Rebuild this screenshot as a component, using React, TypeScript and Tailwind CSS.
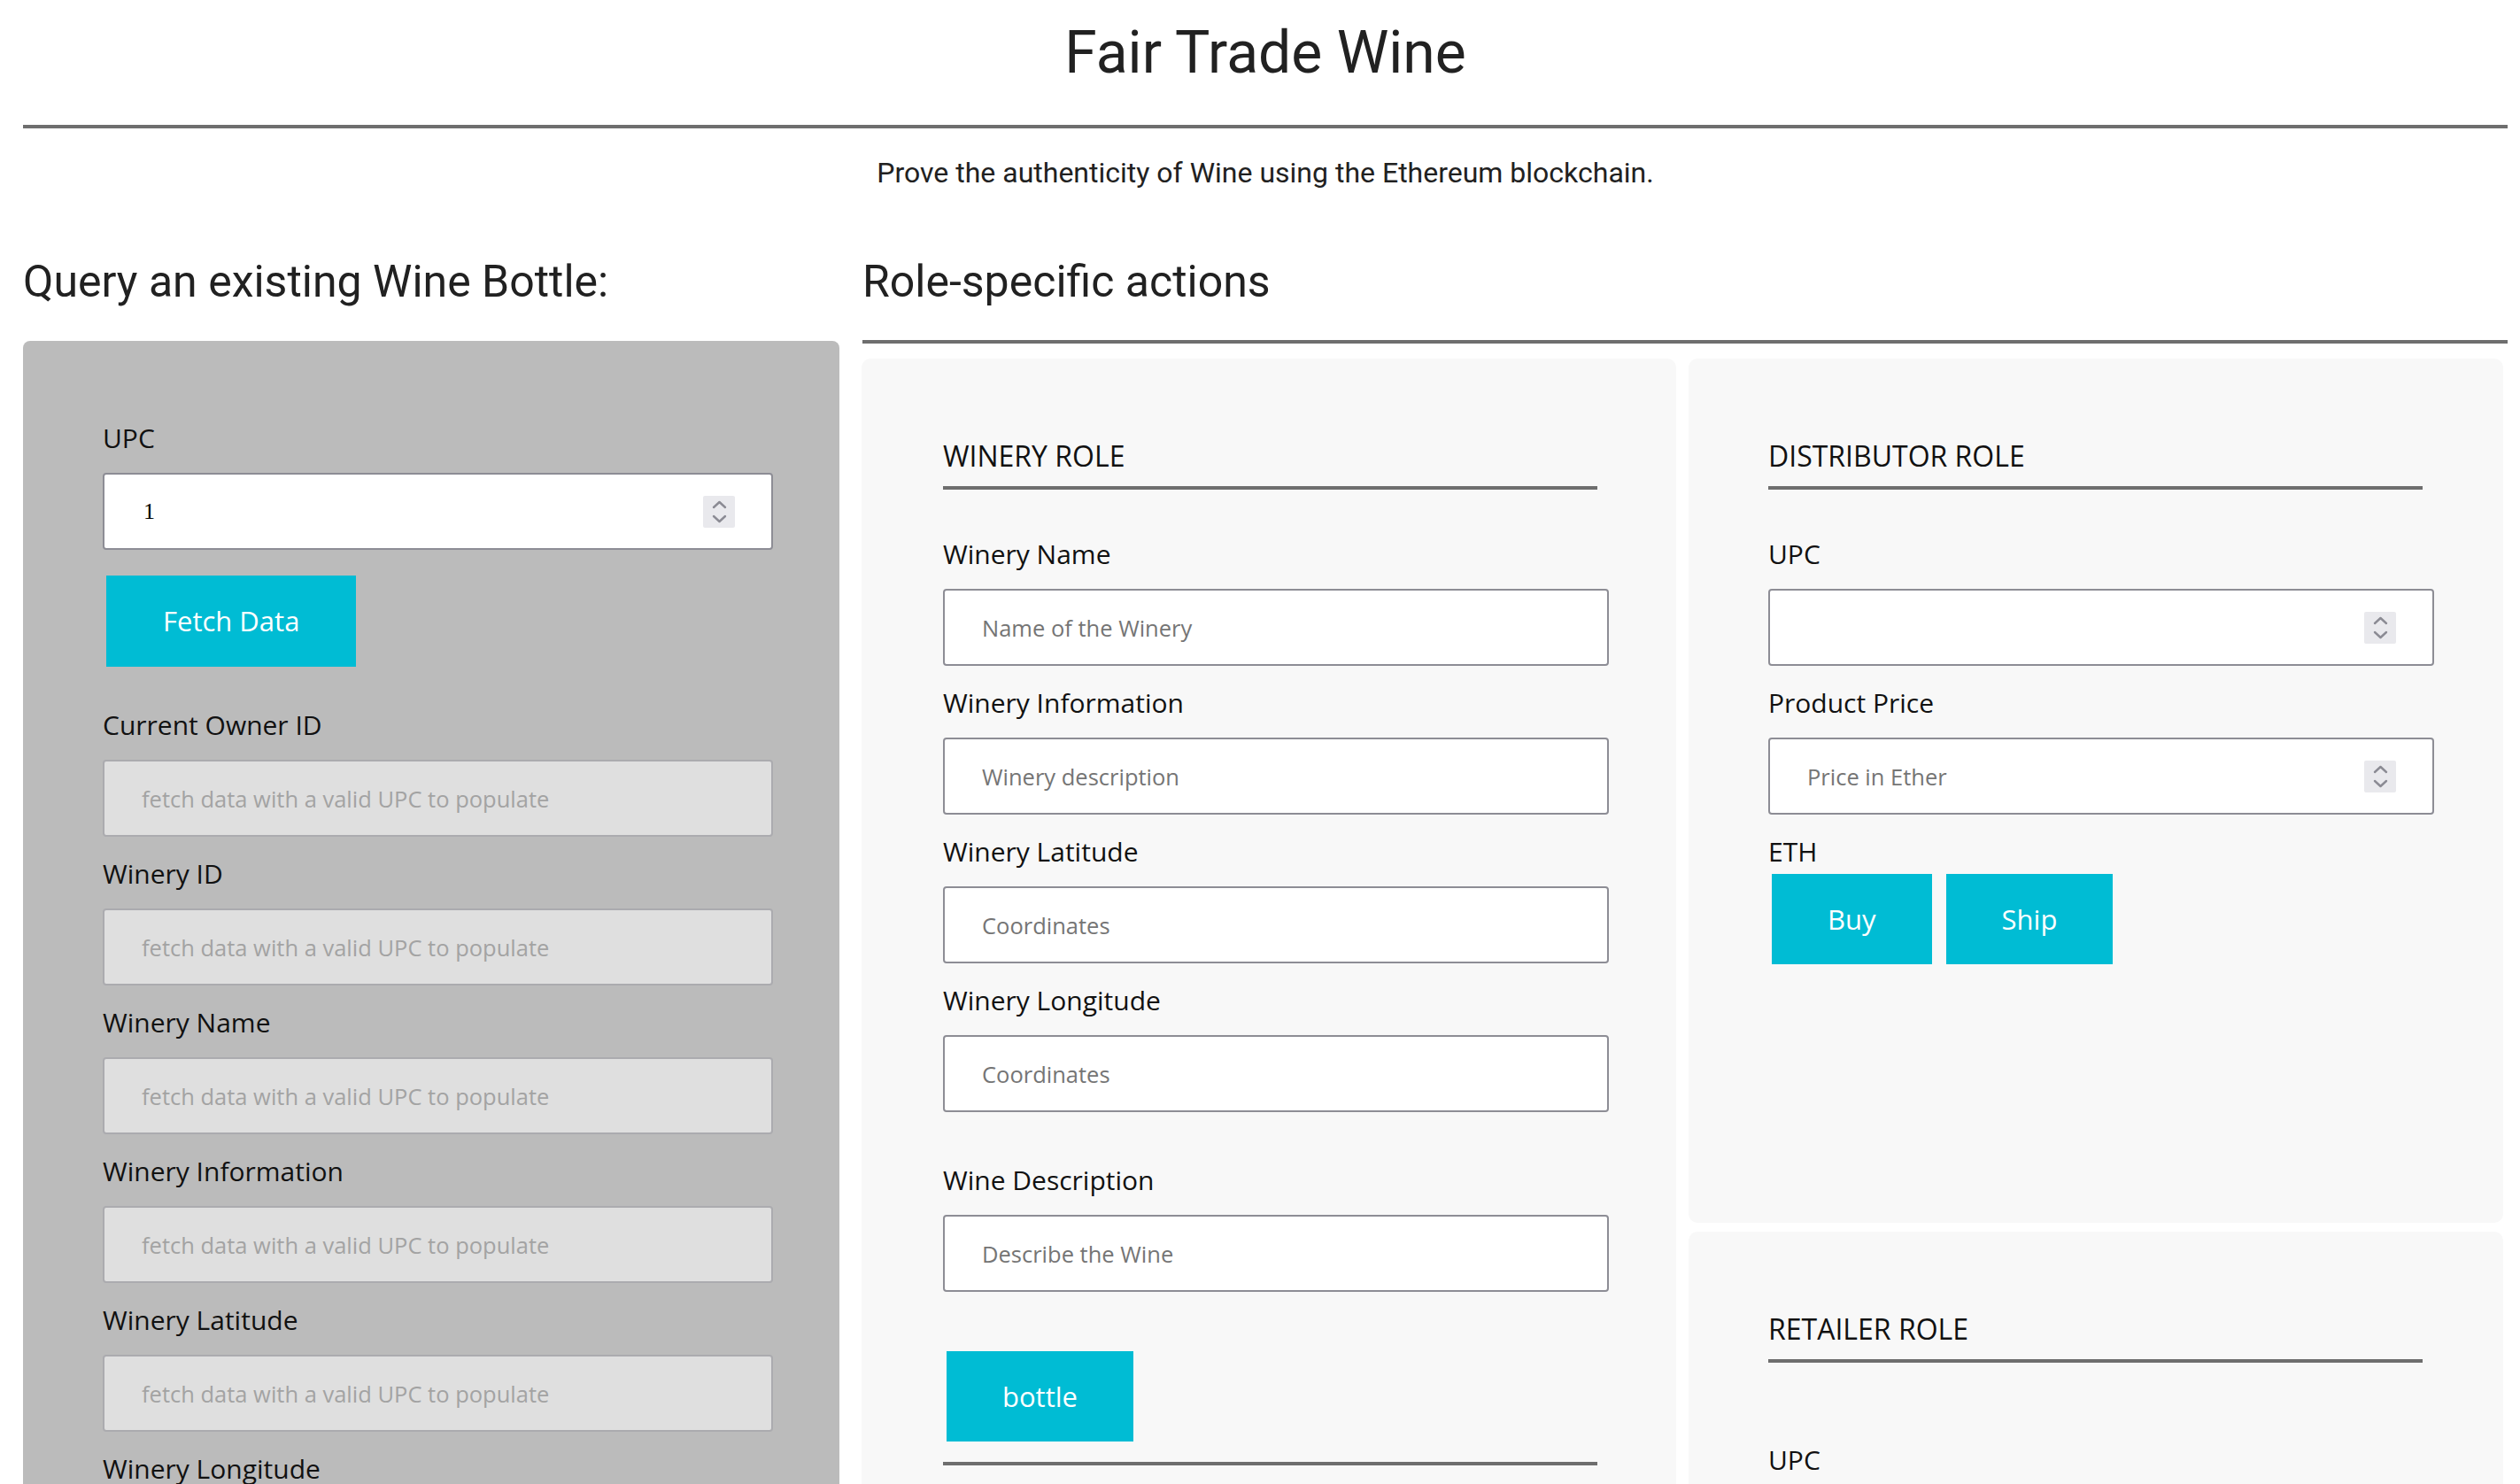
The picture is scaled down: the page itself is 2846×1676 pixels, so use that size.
import React from "react";

const LABEL = "block font-['Open_Sans',sans-serif] text-[30px] leading-[29px] text-[#111]";
const BUTTON =
  "h-[102px] bg-[#00bcd4] px-[63px] font-['Open_Sans',sans-serif] text-[31px] text-white";

function Spinner() {
  return (
    <div className="pointer-events-none absolute right-[43px] top-1/2 h-[36px] w-[36px] -translate-y-1/2 rounded-[2px] bg-[#e9e9ed]">
      <svg viewBox="0 0 36 36" className="h-full w-full" fill="none" stroke="#8b8b94" strokeWidth="2.4" strokeLinecap="round" strokeLinejoin="round">
        <polyline points="12,13 18.5,7 25,13" />
        <polyline points="12,23 18.5,29 25,23" />
      </svg>
    </div>
  );
}

function Field({
  label,
  placeholder,
  value,
  spinner,
  disabled,
  width = "w-[752px]",
}: {
  label: string;
  placeholder?: string;
  value?: string;
  spinner?: boolean;
  disabled?: boolean;
  width?: string;
}) {
  return (
    <div>
      <label className={LABEL}>{label}</label>
      <div className={`relative mt-[25px] h-[87px] ${width}`}>
        <input
          type="text"
          defaultValue={value}
          placeholder={placeholder}
          disabled={disabled}
          className={
            disabled
              ? "h-full w-full rounded-[4px] border-2 border-[#ababaf] bg-[#dfdfdf] pl-[42px] font-['Open_Sans',sans-serif] text-[25.5px] placeholder:text-[#a3a3a3] focus:outline-none"
              : value
              ? "h-full w-full rounded-[4px] border-2 border-[#8d8d95] bg-white pl-[44px] font-['Liberation_Serif',serif] text-[26px] text-black focus:outline-none"
              : "h-full w-full rounded-[4px] border-2 border-[#8d8d95] bg-white pl-[42px] font-['Open_Sans',sans-serif] text-[25.5px] placeholder:text-[#757575] focus:outline-none"
          }
        />
        {spinner && <Spinner />}
      </div>
    </div>
  );
}

function RoleTitle({ children }: { children: React.ReactNode }) {
  return (
    <>
      <h3 className="block font-['Open_Sans',sans-serif] text-[32px] leading-[29px] text-[#111]">{children}</h3>
      <div className="mt-[20px] h-[4px] w-[739px] bg-[#6e6e6e]" />
    </>
  );
}

const FETCH = "fetch data with a valid UPC to populate";

export default function App() {
  return (
    <div className="min-h-screen bg-white pl-[26px] pr-[14px] font-['Roboto',sans-serif] text-[#212121]">
      <header>
        <h1 className="pt-[27px] text-center text-[66px] leading-[65px]">Fair Trade Wine</h1>
        <div className="mt-[49px] h-[4px] bg-[#6e6e6e]" />
        <p className="mt-[35px] text-center text-[32px] leading-[30px]">
          Prove the authenticity of Wine using the Ethereum blockchain.
        </p>
      </header>

      <main className="mt-[84px] grid grid-cols-[922px_1fr] gap-x-[25px]">
        <section>
          <h2 className="text-[50px] leading-[48px]">Query an existing Wine Bottle:</h2>
          <div className="mt-[43px] rounded-t-[8px] bg-[#bbbbbb] pb-[60px] pl-[90px] pt-[95px]">
            <Field label="UPC" value="1" spinner width="w-[757px]" />
            <div className="ml-[4px] mt-[29px]">
              <button className={`${BUTTON} h-[103px] px-[64px]`}>Fetch Data</button>
            </div>
            <div className="mt-[51px] flex flex-col gap-[27px]">
              <Field label="Current Owner ID" placeholder={FETCH} disabled width="w-[757px]" />
              <Field label="Winery ID" placeholder={FETCH} disabled width="w-[757px]" />
              <Field label="Winery Name" placeholder={FETCH} disabled width="w-[757px]" />
              <Field label="Winery Information" placeholder={FETCH} disabled width="w-[757px]" />
              <Field label="Winery Latitude" placeholder={FETCH} disabled width="w-[757px]" />
              <Field label="Winery Longitude" placeholder={FETCH} disabled width="w-[757px]" />
            </div>
          </div>
        </section>

        <section>
          <h2 className="pl-[1px] text-[50px] leading-[48px]">Role-specific actions</h2>
          <div className="ml-[1px] mt-[42px] h-[4px] bg-[#6e6e6e]" />
          <div className="mt-[17px] grid grid-cols-2 items-start gap-x-[14px] pr-[5px]">
            <div className="rounded-[10px] bg-[#f8f8f8] pb-[60px] pl-[92px] pt-[95px]">
              <RoleTitle>WINERY ROLE</RoleTitle>
              <div className="mt-[58px] flex flex-col gap-[27px]">
                <Field label="Winery Name" placeholder="Name of the Winery" />
                <Field label="Winery Information" placeholder="Winery description" />
                <Field label="Winery Latitude" placeholder="Coordinates" />
                <Field label="Winery Longitude" placeholder="Coordinates" />
              </div>
              <div className="mt-[62px]">
                <Field label="Wine Description" placeholder="Describe the Wine" />
              </div>
              <div className="ml-[4px] mt-[67px]">
                <button className={BUTTON}>bottle</button>
              </div>
              <div className="mt-[23px] h-[4px] w-[739px] bg-[#6e6e6e]" />
            </div>

            <div className="flex flex-col gap-[10px]">
              <div className="h-[976px] rounded-[10px] bg-[#f8f8f8] pl-[90px] pt-[95px]">
                <RoleTitle>DISTRIBUTOR ROLE</RoleTitle>
                <div className="mt-[58px] flex flex-col gap-[27px]">
                  <Field label="UPC" spinner />
                  <Field label="Product Price" placeholder="Price in Ether" spinner />
                  <div>
                    <span className={LABEL}>ETH</span>
                    <div className="ml-[4px] mt-[11px] flex gap-[16px]">
                      <button className={BUTTON}>Buy</button>
                      <button className={BUTTON}>Ship</button>
                    </div>
                  </div>
                </div>
              </div>
              <div className="rounded-[10px] bg-[#f8f8f8] pb-[60px] pl-[90px] pt-[95px]">
                <RoleTitle>RETAILER ROLE</RoleTitle>
                <div className="mt-[95px]">
                  <Field label="UPC" spinner />
                </div>
              </div>
            </div>
          </div>
        </section>
      </main>
    </div>
  );
}
